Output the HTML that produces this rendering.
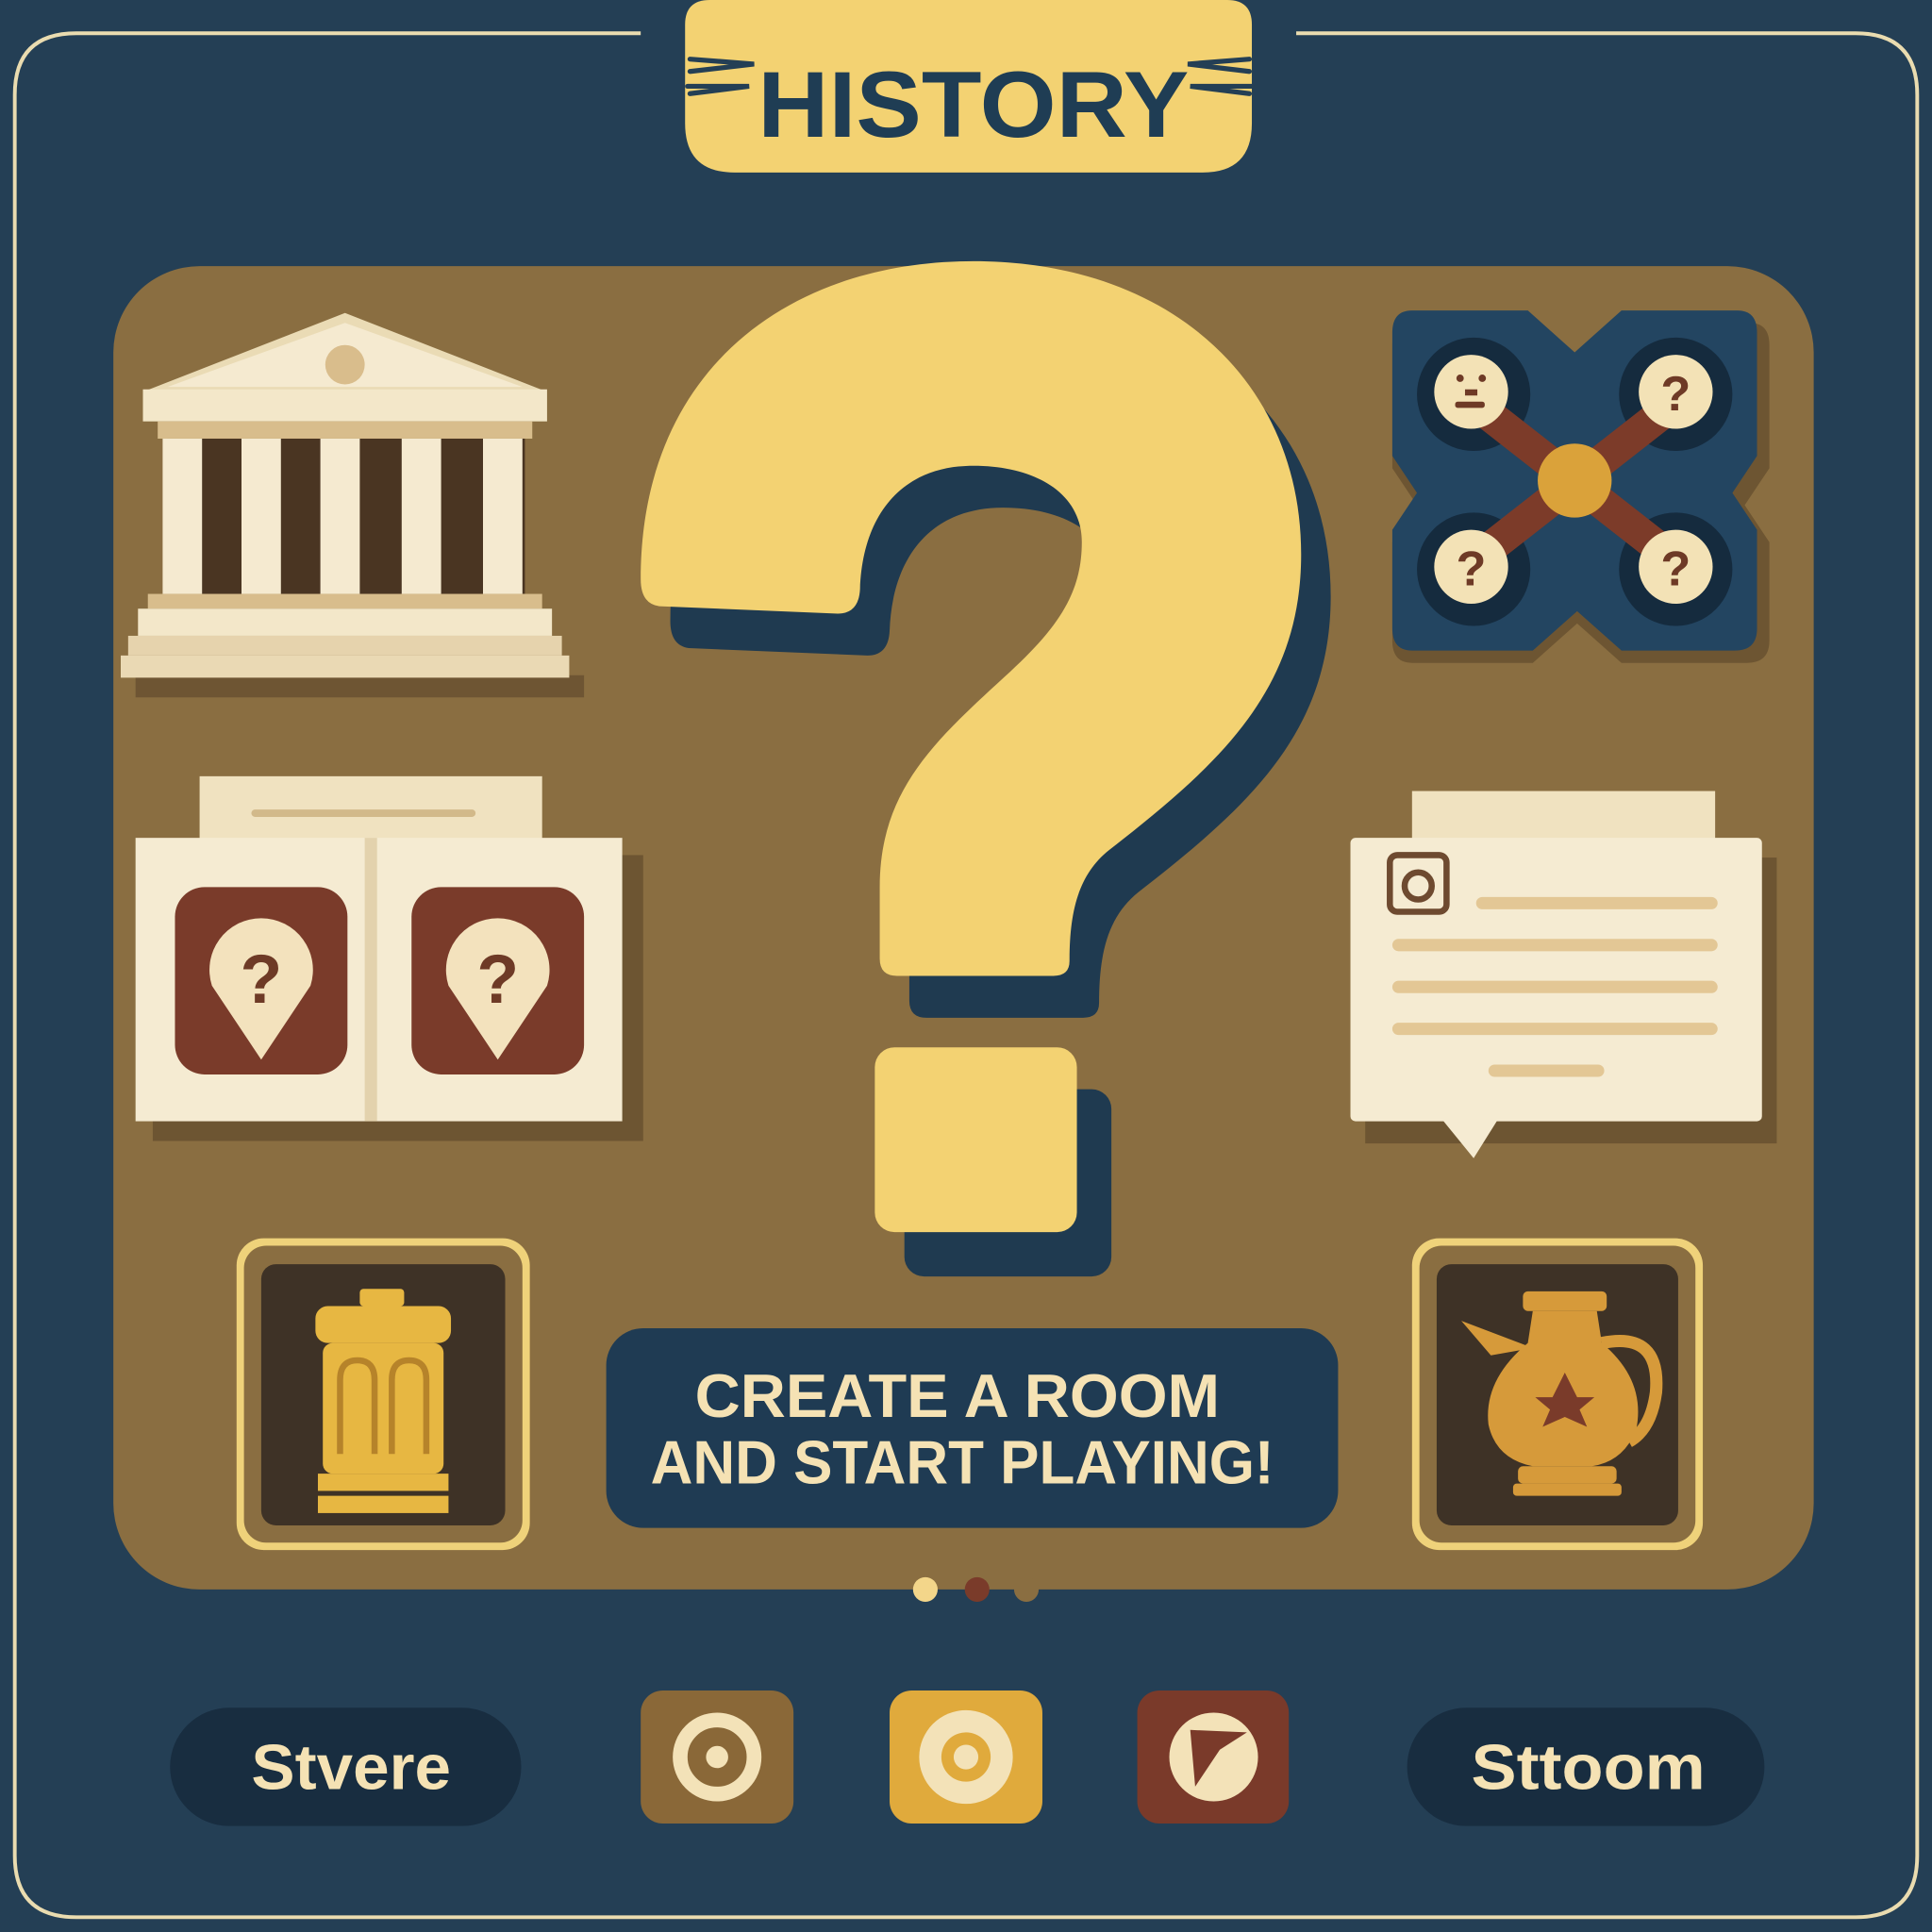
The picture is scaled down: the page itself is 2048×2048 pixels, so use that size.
<!DOCTYPE html>
<html><head><meta charset="utf-8"><style>
html,body{margin:0;padding:0;background:#233f55;}
svg{display:block}
text{font-family:"Liberation Sans","DejaVu Sans",sans-serif;font-weight:bold}
</style></head><body>
<svg width="2048" height="2048" viewBox="0 0 1568 1568" xmlns="http://www.w3.org/2000/svg">
<rect width="1568" height="1568" fill="#243f55"/>
<path d="M520,27 L62,27 Q12,27 12,77 L12,1506 Q12,1556 62,1556 L1506,1556 Q1556,1556 1556,1506 L1556,77 Q1556,27 1506,27 L1052,27" fill="none" stroke="#eadcb0" stroke-width="3"/>
<path d="M576,0 L996,0 Q1016,0 1016,20 L1016,100 Q1016,140 976,140 L596,140 Q556,140 556,100 L556,20 Q556,0 576,0 Z" fill="#f3d272"/>
<path d="M560,48 L612,52 L560,58 M558,70 L608,70 L560,76 M1014,48 L964,52 L1014,58 M1016,70 L966,70 L1014,76" stroke="#243f55" stroke-width="4" fill="none" stroke-linecap="round"/>
<text x="790" y="111" text-anchor="middle" font-size="76" fill="#1f3d54" textLength="350" lengthAdjust="spacingAndGlyphs">HISTORY</text>
<rect x="92" y="216" width="1380" height="1074" rx="70" fill="#8a6e41"/>
<g>
<rect x="110" y="548" width="364" height="18" fill="#6e5533"/>
<path d="M116,318 L280,254 L444,318 Z" fill="#eadbb5"/>
<path d="M136,314 L280,262 L424,314 Z" fill="#f5ead0"/>
<circle cx="280" cy="296" r="16" fill="#d9bd8c"/>
<rect x="116" y="316" width="328" height="26" fill="#f3e7c9"/>
<rect x="128" y="342" width="304" height="14" fill="#d8bd8c"/>
<rect x="136" y="356" width="290" height="126" fill="#4a3522"/>
<g fill="#f5ead0">
<rect x="132" y="356" width="32" height="126"/><rect x="196" y="356" width="32" height="126"/><rect x="260" y="356" width="32" height="126"/><rect x="326" y="356" width="32" height="126"/><rect x="392" y="356" width="32" height="126"/></g>
<rect x="120" y="482" width="320" height="12" fill="#d8bd8c"/>
<rect x="112" y="494" width="336" height="22" fill="#f3e7c9"/>
<rect x="104" y="516" width="352" height="16" fill="#e6d3ad"/>
<rect x="98" y="532" width="364" height="18" fill="#ead9b4"/>
</g>
<g>
<path d="M1146,262 L1240,262 L1278,296 L1316,262 L1420,262 Q1436,262 1436,280 L1436,380 L1416,410 L1436,440 L1436,520 Q1436,538 1418,538 L1316,538 L1280,506 L1244,538 L1146,538 Q1130,538 1130,520 L1130,440 L1150,410 L1130,380 L1130,280 Q1130,262 1146,262Z" fill="#6d5532"/>
<path d="M1146,252 L1240,252 L1278,286 L1316,252 L1410,252 Q1426,252 1426,270 L1426,370 L1406,400 L1426,430 L1426,510 Q1426,528 1408,528 L1316,528 L1280,496 L1244,528 L1146,528 Q1130,528 1130,510 L1130,430 L1150,400 L1130,370 L1130,270 Q1130,252 1146,252Z" fill="#234561"/>
<g fill="#152b3e"><circle cx="1196" cy="320" r="46"/><circle cx="1360" cy="320" r="46"/><circle cx="1196" cy="462" r="46"/><circle cx="1360" cy="462" r="46"/></g>
<path d="M1200,330 L1356,452 M1356,330 L1200,452" stroke="#7c3b29" stroke-width="26"/>
<circle cx="1278" cy="390" r="30" fill="#daa23a"/>
<g fill="#f3e2b6"><circle cx="1194" cy="318" r="30"/><circle cx="1360" cy="318" r="30"/><circle cx="1194" cy="460" r="30"/><circle cx="1360" cy="460" r="30"/></g>
<g fill="#6e3a26" font-size="40" text-anchor="middle"><text x="1360" y="333">?</text><text x="1194" y="475">?</text><text x="1360" y="475">?</text></g>
<g fill="#6e3a26"><circle cx="1185" cy="307" r="3"/><circle cx="1203" cy="307" r="3"/><rect x="1189" y="316" width="10" height="5"/><rect x="1181" y="326" width="24" height="5" rx="2"/></g>
</g>
<g>
<rect x="124" y="694" width="398" height="232" fill="#6d5532"/>
<rect x="162" y="630" width="278" height="60" fill="#f0e2c0"/>
<rect x="204" y="657" width="182" height="6" rx="3" fill="#d2b98a"/>
<rect x="110" y="680" width="395" height="230" fill="#f5ebd2"/>
<rect x="296" y="680" width="10" height="230" fill="#e3d2ad"/>
<rect x="142" y="720" width="140" height="152" rx="24" fill="#7a3b2a"/>
<rect x="334" y="720" width="140" height="152" rx="24" fill="#7a3b2a"/>
<path d="M212,860 L172,800 A42,42 0 1,1 252,800 Z" fill="#f3e2bd"/>
<path d="M404,860 L364,800 A42,42 0 1,1 444,800 Z" fill="#f3e2bd"/>
<g fill="#6e3a26" font-size="56" text-anchor="middle"><text x="212" y="814">?</text><text x="404" y="814">?</text></g>
</g>
<g>
<rect x="1108" y="696" width="334" height="232" fill="#6d5532"/>
<rect x="1146" y="642" width="246" height="50" fill="#f0e2c0"/>
<rect x="1096" y="680" width="334" height="230" rx="4" fill="#f5ebd2"/>
<path d="M1170,908 L1196,940 L1216,908Z" fill="#f5ebd2"/>
<rect x="1128" y="694" width="46" height="46" rx="6" fill="none" stroke="#6e4a30" stroke-width="5"/>
<circle cx="1151" cy="719" r="11" fill="none" stroke="#6e4a30" stroke-width="5"/>
<g fill="#e3c795"><rect x="1198" y="728" width="196" height="10" rx="5"/><rect x="1130" y="762" width="264" height="10" rx="5"/><rect x="1130" y="796" width="264" height="10" rx="5"/><rect x="1130" y="830" width="264" height="10" rx="5"/><rect x="1208" y="864" width="94" height="10" rx="5"/></g>
</g>
<g>
<path transform="translate(24,34)" d="M520,470 C520,300 640,212 790,212 C950,212 1056,310 1056,450 C1056,560 990,620 900,690 C875,710 868,740 868,780 Q868,792 855,792 L728,792 Q714,792 714,778 L714,720 C714,640 760,600 820,545 C860,508 878,480 878,440 C878,400 840,378 790,378 C730,378 700,420 698,478 Q697,498 680,498 L535,492 Q520,490 520,470 Z" fill="#1f3a50"/>
<rect x="734" y="884" width="168" height="152" rx="16" fill="#1f3a50"/>
<path d="M520,470 C520,300 640,212 790,212 C950,212 1056,310 1056,450 C1056,560 990,620 900,690 C875,710 868,740 868,780 Q868,792 855,792 L728,792 Q714,792 714,778 L714,720 C714,640 760,600 820,545 C860,508 878,480 878,440 C878,400 840,378 790,378 C730,378 700,420 698,478 Q697,498 680,498 L535,492 Q520,490 520,470 Z" fill="#f3d272"/>
<rect x="710" y="850" width="164" height="150" rx="16" fill="#f3d272"/>
</g>
<rect x="192" y="1005" width="238" height="253" rx="22" fill="#efd27a"/>
<rect x="198" y="1011" width="226" height="241" rx="18" fill="#8a6e41"/>
<rect x="212" y="1026" width="198" height="212" rx="12" fill="#3e3226"/>
<g fill="#e7b742">
<rect x="292" y="1046" width="36" height="14" rx="3"/>
<rect x="256" y="1060" width="110" height="30" rx="10"/>
<rect x="262" y="1090" width="98" height="106" rx="8"/>
<rect x="258" y="1196" width="106" height="14"/>
<rect x="258" y="1214" width="106" height="14"/>
</g>
<path d="M276,1180 L276,1120 Q276,1104 290,1104 Q304,1104 304,1120 L304,1180 M318,1180 L318,1120 Q318,1104 332,1104 Q346,1104 346,1120 L346,1180" fill="none" stroke="#b6832a" stroke-width="5"/>
<rect x="1146" y="1005" width="236" height="253" rx="22" fill="#efd27a"/>
<rect x="1152" y="1011" width="224" height="241" rx="18" fill="#8a6e41"/>
<rect x="1166" y="1026" width="196" height="212" rx="12" fill="#3e3226"/>
<g fill="#d69a3a">
<rect x="1236" y="1048" width="68" height="16" rx="4"/>
<path d="M1244,1064 L1296,1064 L1300,1090 Q1336,1120 1328,1160 Q1318,1186 1292,1190 L1244,1190 Q1214,1184 1208,1156 Q1204,1120 1240,1090 Z"/>
<path d="M1300,1090 Q1348,1080 1344,1130 Q1340,1160 1322,1170" fill="none" stroke="#d69a3a" stroke-width="10"/>
<path d="M1244,1094 L1186,1072 L1210,1100 Z"/>
<rect x="1232" y="1190" width="80" height="14" rx="4"/>
<rect x="1228" y="1204" width="88" height="10" rx="3"/>
</g>
<path d="M1270,1114 L1280,1134 L1294,1134 L1282,1144 L1288,1158 L1270,1150 L1252,1158 L1258,1144 L1246,1134 L1260,1134 Z" fill="#7a3b2a"/>
<rect x="492" y="1078" width="594" height="162" rx="30" fill="#1f3b53"/>
<text x="777" y="1150" text-anchor="middle" font-size="50" fill="#f5e2b4" textLength="426" lengthAdjust="spacingAndGlyphs">CREATE A ROOM</text>
<text x="781" y="1204" text-anchor="middle" font-size="50" fill="#f5e2b4" textLength="506" lengthAdjust="spacingAndGlyphs">AND START PLAYING!</text>
<circle cx="751" cy="1290" r="10" fill="#f3d68a"/>
<circle cx="793" cy="1290" r="10" fill="#7a3b2a"/>
<circle cx="833" cy="1290" r="10" fill="#8a6e41"/>
<rect x="138" y="1386" width="285" height="96" rx="48" fill="#182d40"/>
<text x="285" y="1452" text-anchor="middle" font-size="52" fill="#f5e2b4" textLength="162" lengthAdjust="spacingAndGlyphs">Stvere</text>
<rect x="1142" y="1386" width="290" height="96" rx="48" fill="#182d40"/>
<text x="1289" y="1452" text-anchor="middle" font-size="52" fill="#f5e2b4" textLength="190" lengthAdjust="spacingAndGlyphs">Sttoom</text>
<rect x="520" y="1372" width="124" height="108" rx="18" fill="#8a6838"/>
<circle cx="582" cy="1426" r="30" fill="none" stroke="#f3e2b8" stroke-width="12"/>
<circle cx="582" cy="1426" r="9" fill="#f3e2b8"/>
<rect x="722" y="1372" width="124" height="108" rx="18" fill="#e0aa3c"/>
<circle cx="784" cy="1426" r="38" fill="#f3e2b8"/>
<circle cx="784" cy="1426" r="20" fill="#e0aa3c"/>
<circle cx="784" cy="1426" r="10" fill="#f3e2b8"/>
<rect x="923" y="1372" width="123" height="108" rx="18" fill="#7a3a2a"/>
<circle cx="985" cy="1426" r="36" fill="#f3e2b8"/>
<path d="M966,1404 L1012,1406 L990,1420 L970,1450 Z" fill="#7a3a2a"/>
</svg>
</body></html>
